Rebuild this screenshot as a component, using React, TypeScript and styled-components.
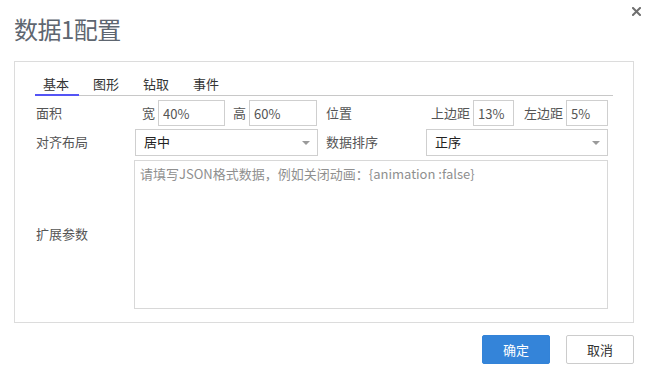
import React, { useState } from 'react';
import styled, { createGlobalStyle } from 'styled-components';

const GlobalStyle = createGlobalStyle`
    html, body {
        margin: 0;
        padding: 0;
        background: #fff;
    }
    body {
        font-family: 'Noto Sans CJK SC', 'Noto Sans', sans-serif;
        font-size: 13px;
        line-height: 1.3;
        color: #555;
    }
`;

const TABS = ['基本', '图形', '钻取', '事件'];

const App: React.FC = () => {
    const [active, setActive] = useState(0);

    return (
        <Dialog>
            <GlobalStyle />
            <CloseButton aria-label="close">
                <svg width="9" height="9" viewBox="0 0 9 9">
                    <path d="M1 1 L8 8 M8 1 L1 8" stroke="#6f6f6f" strokeWidth="2" strokeLinecap="square" />
                </svg>
            </CloseButton>
            <Title>数据1配置</Title>
            <Panel>
                <TabBar>
                    {TABS.map((t, i) => (
                        <Tab key={t} active={i === active} onClick={() => setActive(i)}>
                            {t}
                        </Tab>
                    ))}
                </TabBar>
                <Form>
                    <Row>
                        <Label>面积</Label>
                        <Inline>
                            <SubLabel>宽</SubLabel>
                            <TextInput width={67} defaultValue="40%" />
                            <SubLabel gap={8}>高</SubLabel>
                            <TextInput width={68} defaultValue="60%" />
                        </Inline>
                        <Label2>位置</Label2>
                        <Inline>
                            <SubLabel gap={6}>上边距</SubLabel>
                            <TextInput width={41} defaultValue="13%" />
                            <SubLabel gap={10}>左边距</SubLabel>
                            <TextInput width={42} defaultValue="5%" />
                        </Inline>
                    </Row>
                    <Row tall>
                        <Label>对齐布局</Label>
                        <Select>
                            <span>居中</span>
                            <Caret />
                        </Select>
                        <Label2>数据排序</Label2>
                        <Select>
                            <span>正序</span>
                            <Caret />
                        </Select>
                    </Row>
                    <AreaRow>
                        <Label>扩展参数</Label>
                        <TextArea placeholder="请填写JSON格式数据，例如关闭动画：{animation :false}" />
                    </AreaRow>
                </Form>
            </Panel>
            <Footer>
                <Button primary>确定</Button>
                <Button>取消</Button>
            </Footer>
        </Dialog>
    );
};

const Dialog = styled.div`
    position: relative;
    width: 648px;
    height: 381px;
    box-sizing: border-box;
    padding: 14px 14px 0 14px;
`;

const CloseButton = styled.div`
    position: absolute;
    top: 7px;
    right: 7px;
    width: 9px;
    height: 9px;
    cursor: pointer;
    svg {
        display: block;
    }
`;

const Title = styled.h1`
    margin: 0;
    font-size: 24px;
    font-weight: normal;
    line-height: 30px;
    color: #5e6670;
    letter-spacing: -0.5px;
`;

const Panel = styled.div`
    margin-top: 17px;
    width: 620px;
    box-sizing: border-box;
    border: 1px solid #dcdcdc;
    padding: 11px 20px 13px 20px;
`;

const TabBar = styled.div`
    display: flex;
    gap: 6px;
    border-bottom: 1px solid #c8c8c8;
`;

const Tab = styled.div<{ active?: boolean }>`
    width: 44px;
    box-sizing: border-box;
    padding-left: 8px;
    line-height: 21px;
    margin-bottom: -1px;
    color: #333;
    border-bottom: 2px solid ${p => (p.active ? '#5454f5' : 'transparent')};
    cursor: pointer;
`;

const Form = styled.div`
    margin-top: 4px;
    margin-right: 5px;
    display: flex;
    flex-direction: column;
    gap: 3px;
`;

const Row = styled.div<{ tall?: boolean }>`
    display: grid;
    grid-template-columns: 99px 184px 107px 1fr;
    height: ${p => (p.tall ? 27 : 26)}px;
    align-items: stretch;
`;

const AreaRow = styled.div`
    display: grid;
    grid-template-columns: 99px 1fr;
    height: 149px;
    margin-top: 1px;
`;

const Label = styled.div`
    padding-left: 1px;
    display: flex;
    align-items: center;
    white-space: nowrap;
    color: #555;
`;

const Label2 = styled(Label)`
    padding-left: 8px;
`;

const Inline = styled.div`
    display: flex;
    align-items: stretch;
    min-width: 0;
`;

const SubLabel = styled.span<{ gap?: number }>`
    display: flex;
    align-items: center;
    flex-shrink: 0;
    white-space: nowrap;
    padding-left: ${p => p.gap ?? 8}px;
    padding-right: 3px;
    color: #555;
`;

const TextInput = styled.input<{ width: number }>`
    width: ${p => p.width}px;
    height: 26px;
    flex-shrink: 0;
    box-sizing: border-box;
    border: 1px solid #cfcfcf;
    padding: 0 4px;
    font-family: inherit;
    font-size: 13px;
    color: #555;
    outline: none;
`;

const Select = styled.div`
    margin-left: 1px;
    box-sizing: border-box;
    border: 1px solid #cfcfcf;
    display: flex;
    align-items: center;
    justify-content: space-between;
    padding: 0 7px 0 8px;
    color: #222;
`;

const Caret = styled.i`
    width: 0;
    height: 0;
    border-left: 4px solid transparent;
    border-right: 4px solid transparent;
    border-top: 4px solid #9a9a9a;
`;

const TextArea = styled.textarea`
    box-sizing: border-box;
    border: 1px solid #d8d8d8;
    resize: none;
    padding: 3px 5px;
    font-family: inherit;
    font-size: 13px;
    line-height: 20px;
    color: #555;
    outline: none;
    &::placeholder {
        color: #8f8f8f;
    }
`;

const Footer = styled.div`
    width: 620px;
    margin-top: 12px;
    display: flex;
    justify-content: flex-end;
    gap: 16px;
`;

const Button = styled.button<{ primary?: boolean }>`
    width: 68px;
    height: 29px;
    box-sizing: border-box;
    border-radius: 2px;
    font-family: inherit;
    font-size: 13px;
    cursor: pointer;
    border: 1px solid ${p => (p.primary ? '#3383d8' : '#cccccc')};
    background: ${p => (p.primary ? '#3484d9' : '#fff')};
    color: ${p => (p.primary ? '#fff' : '#333')};
`;

export default App;
